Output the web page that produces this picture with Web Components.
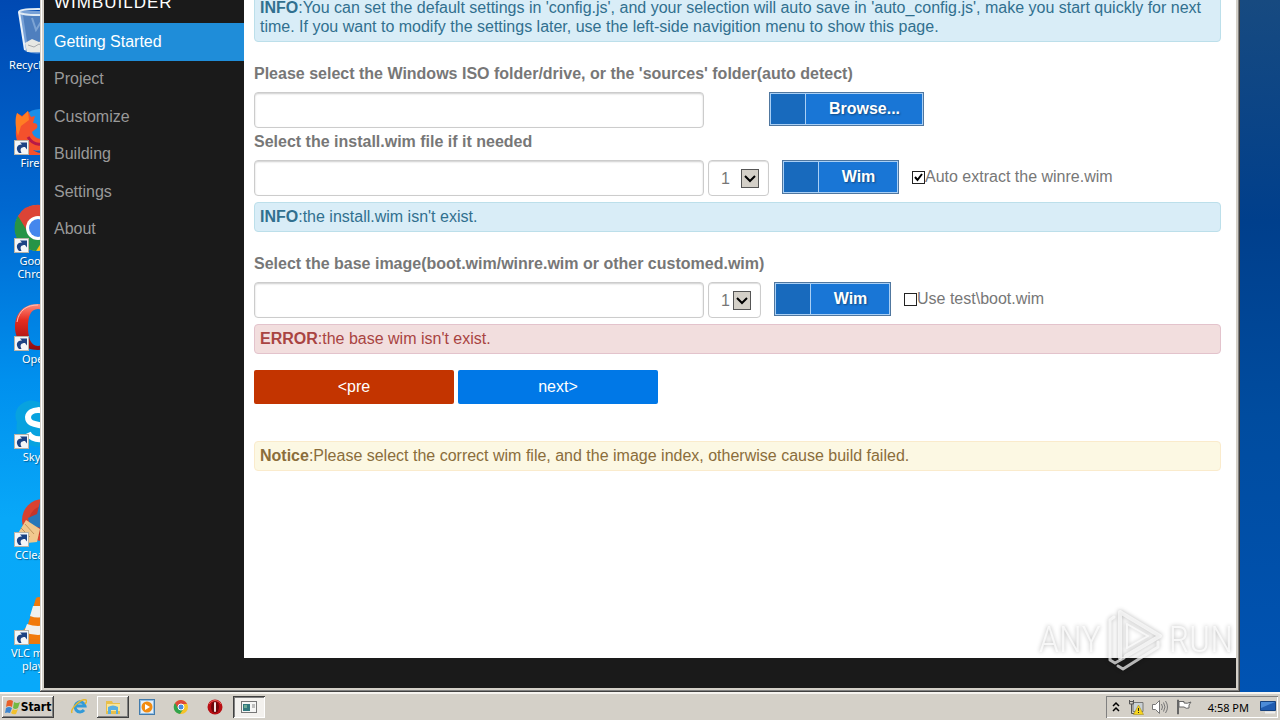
<!DOCTYPE html>
<html lang="en">
<head>
<meta charset="utf-8">
<title>WimBuilder</title>
<style>
  html, body { height: 100%; margin: 0; overflow: hidden; }
  body { font-family: "Liberation Sans", Arial, sans-serif; font-size: 16px; }
</style>
</head>
<body>
<desk-top></desk-top>

<script>
const shortcutArrow = `
  <rect x=".5" y="34.5" width="14" height="14" fill="#f4f6f8" stroke="#b9b4a8"/>
  <path d="M5 47C1 43 3 38 8 38.500L6 36.500h7v7l-2-2.500C7 41 5.500 43 7.500 47z" fill="#1d4384"/>`;

const desktopIcons = {
  recycle: `
    <path d="M5 3l6 40q12 5 24 0L43 3z" fill="#a9c5e4" opacity=".7"/>
    <path d="M9 7l5 33 20 2 5-34z" fill="#3f70b4" opacity=".7"/>
    <ellipse cx="24" cy="4" rx="19" ry="3" fill="none" stroke="#dfeaf4" stroke-width="2"/>
    <path d="M5 4l6 38" stroke="#e8f1fa" stroke-width="2"/>
    <path d="M11 35l7-4 7 3 8-3 3 8-5 5-18 0z" fill="#e7e8e4"/>
    <path d="M14 37l6 2 5-3 6 4" fill="none" stroke="#a7aaad"/>
    <path d="M18 10l4 12 5-8 4 12" fill="none" stroke="#7da4d4" stroke-width="2"/>`,
  firefox: `
    <circle cx="26" cy="24" r="21" fill="#1a8fe8"/>
    <path d="M3 7l5 3 6-5 3 6 4-1-2 7c4 0 5 2 4 5l-5 4c2 7 9 8 14 6 5 8-4 14-13 12 12 8 23 0 24-14 8 20-8 25-18 25C9 50-2 36 3 18z" fill="#f4512c"/>
    <path d="M3 7l5 4 6-6 1 9-8 6-3 10C1 20 1 12 3 7z" fill="#ff7d24"/>
    <path d="M14 31c6 10 16 8 20 4" fill="none" stroke="#b71948" stroke-width="3"/>`,
  chrome: `
    <circle cx="24" cy="24" r="23" fill="#fbc116"/>
    <path d="M24 24L4 12A23 23 0 0 0 22 47L33 30z" fill="#279447"/>
    <path d="M4 12A23 23 0 0 1 44 13H24L15 30z" fill="#dc4436"/>
    <circle cx="24" cy="24" r="12" fill="#fff"/>
    <circle cx="24" cy="24" r="9" fill="#4587ed"/>`,
  opera: `
    <defs><linearGradient id="red" x2="0" y2="1"><stop stop-color="#ff8d7d"/><stop offset=".35" stop-color="#e52c20"/><stop offset="1" stop-color="#8d0b10"/></linearGradient></defs>
    <path fill-rule="evenodd" fill="url(#red)" d="M24 2C8 2 1 13 1 25s8 23 23 23 23-11 23-23S40 2 24 2zm0 5c8 0 10 9 10 18s-2 19-10 19-10-10-10-19 2-18 10-18z"/>
    <path d="M3 20C5 8 13 3 24 3" fill="none" stroke="#ffc0b5" stroke-width="1"/>`,
  skype: `
    <path d="M11 2c9-4 13 1 18 1 14 2 19 14 17 24 4 12-7 24-20 20C10 47 0 36 3 22-1 14 3 5 11 2z" fill="#08a2df"/>
    <path d="M35 16c-3-8-20-8-21 1 0 12 21 4 21 15 0 9-17 10-21 1" fill="none" stroke="#fff" stroke-width="6"/>`,
  ccleaner: `
    <circle cx="29" cy="22" r="21" fill="#d84230"/>
    <circle cx="30" cy="23" r="15" fill="#c3352a"/>
    <path d="M26 4l-3 12-9 4 2 8 12 2L44 5z" fill="#2877b8"/>
    <path d="M12 22l14 9-3 13-10 1-10-8z" fill="#f1c78d"/>
    <path d="M11 26l9 10M7 30l9 9" stroke="#c1935a"/>`,
  vlc: `
    <path d="M7 37l4-5h26l4 5 2 11H5z" fill="#e87910"/>
    <path d="M22 2q3-2 5 0l12 39q-14 6-29 0z" fill="#f17a0b"/>
    <path d="M19 10h10l3 10q-8 3-16 0zM13 28q11 4 22 0l3 8q-14 6-28 0z" fill="#f0f0ed"/>`
};

const barIcons = {
  ie: `
    <path d="M13 11a5 5 0 1 1 1-4H4" fill="none" stroke="#329ad8" stroke-width="3"/>
    <path d="M1 14C-1 10 10-1 15 1c1 1 0 3-1 4" fill="none" stroke="#e5b72d" stroke-width="1.500"/>`,
  folder: `
    <path d="M1 2h6l1 2h7v11H1z" fill="#e8bf4b"/>
    <path d="M2 5h13v7H2z" fill="#f8e59b"/>
    <path d="M3 15V8q5-3 10 0v7h-2v-4H6v4z" fill="#58afe2"/>`,
  player: `
    <rect x=".5" y=".5" width="15" height="15" fill="#93bfe5" stroke="#427bac"/>
    <rect x="2" y="2" width="12" height="12" fill="#e5eff8"/>
    <circle cx="8" cy="8" r="5.500" fill="#f28c12"/>
    <path d="M6 5l5 3-5 3z" fill="#fff"/>`,
  chrome: `
    <circle cx="8" cy="8" r="7" fill="#f6c327"/>
    <path d="M8 8L2 4a7 7 0 0 0 5 11l4-6z" fill="#31a34c"/>
    <path d="M2 4a7 7 0 0 1 12 1H8L5 9z" fill="#dd4839"/>
    <circle cx="8" cy="8" r="3" fill="#478cdf" stroke="#fff"/>`,
  opera: `
    <circle cx="8" cy="8" r="7.500" fill="#b90d13"/>
    <ellipse cx="8" cy="8" rx="4" ry="6" fill="#6e080c"/>
    <rect x="7" y="3" width="2" height="10" rx="1" fill="#f5e5e3"/>
    <path d="M2 5a7 7 0 0 1 12 0" fill="none" stroke="#ee6660"/>`,
  window: `
    <rect x=".5" y="2.500" width="15" height="11" fill="#f6f6f5" stroke="#777"/>
    <path d="M2 5h7v7H2z" fill="#32787d"/>
    <path d="M3 6h3v3H3z" fill="#6fab95"/>
    <path d="M11 6h3M11 8h3" stroke="#888"/>`
};

class DesktopIcon extends HTMLElement {
  connectedCallback() {
    this.attachShadow({ mode: "open" }).innerHTML = `
      <style>
        :host { display: block; }
        a {
          display: flex; flex-direction: column; align-items: center; gap: 1px;
          color: #fff; text-decoration: none; text-align: center;
          font: 11px/13px "Noto Sans", "DejaVu Sans", sans-serif;
          text-shadow: 1px 1px 1px #0359;
        }
        svg { width: 48px; height: 49px; }
      </style>
      <a href="#">
        <svg viewBox="0 0 48 49" aria-hidden="true">
          ${desktopIcons[this.getAttribute("icon")]}
          ${this.getAttribute("icon") === "recycle" ? "" : shortcutArrow}
        </svg>
        <slot></slot>
      </a>`;
  }
}

class NavItem extends HTMLElement {
  connectedCallback() {
    this.attachShadow({ mode: "open" }).innerHTML = `
      <style>
        :host { display: grid; }
        a { display: flex; align-items: center; padding: 0 10px; color: #999; text-decoration: none; }
        :host([active]) a { background: #1f8dd9; color: #fff; }
      </style>
      <a href="#"><slot></slot></a>`;
  }
}

class NavMenu extends HTMLElement {
  connectedCallback() {
    this.attachShadow({ mode: "open" }).innerHTML = `
      <style>
        :host { display: block; background: #1a1a1a; }
        header { height: 30px; padding: 0 10px; color: #fff; font-size: 17px; line-height: 20px; letter-spacing: 1px; }
        nav { display: grid; grid-auto-rows: 1fr; height: 225px; }
      </style>
      <header>WIMBUILDER</header>
      <nav>
        <nav-item active>Getting Started</nav-item>
        <nav-item>Project</nav-item>
        <nav-item>Customize</nav-item>
        <nav-item>Building</nav-item>
        <nav-item>Settings</nav-item>
        <nav-item>About</nav-item>
      </nav>`;
  }
}

class AlertBox extends HTMLElement {
  connectedCallback() {
    this.attachShadow({ mode: "open" }).innerHTML = `
      <style>
        :host {
          display: block; padding: 4px 5px 5px; line-height: 19px;
          border: 1px solid #bcdfea; border-radius: 4px;
          background: #d9edf7; color: #31708f;
        }
        :host([type="error"]) { background: #f2dede; border-color: #e3c3cc; color: #a94442; }
        :host([type="notice"]) { background: #fcf8e3; border-color: #faebcc; color: #8a6d3b; }
      </style>
      <slot></slot>`;
  }
}

class CommandButton extends HTMLElement {
  connectedCallback() {
    this.attachShadow({ mode: "open" }).innerHTML = `
      <style>
        :host { display: block; }
        button {
          display: grid; grid-template-columns: 36px 1fr; align-items: stretch;
          width: 100%; height: 34px; padding: 0;
          border: 1px solid #50779f; box-shadow: inset 0 0 0 1px #a9cff5;
          background: #1976d6; color: #fff; font: bold 16px "Liberation Sans", sans-serif;
          text-shadow: 1px 1px 2px #0006;
        }
        i { margin: 1px 0 1px 1px; background: #186abd; border-right: 1px solid #a9cff5; }
        span { align-self: center; }
      </style>
      <button type="button"><i></i><span><slot></slot></span></button>`;
  }
}

class IndexSelect extends HTMLElement {
  connectedCallback() {
    this.attachShadow({ mode: "open" }).innerHTML = `
      <style>
        :host { display: grid; height: 36px; }
        select, svg { grid-area: 1 / 1; }
        select {
          appearance: none; box-sizing: border-box; width: 100%; height: 100%; margin: 0; padding: 0 0 0 12px;
          border: 1px solid #ccc; border-radius: 4px; background: #fff; color: #777;
          box-shadow: inset 0 1px 1px #0002; font: 16px "Liberation Sans", sans-serif;
        }
        svg { width: 18px; height: 19px; margin-right: 10px; place-self: center end; pointer-events: none; }
      </style>
      <select aria-label="Image index"><option>1</option></select>
      <svg viewBox="0 0 18 19" aria-hidden="true">
        <rect x=".5" y=".5" width="17" height="18" fill="#d4d0c8" stroke="#555"/>
        <path d="M4 7l5 5 5-5" fill="none" stroke="#000" stroke-width="2"/>
      </svg>`;
  }
}

class CheckOption extends HTMLElement {
  connectedCallback() {
    this.attachShadow({ mode: "open" }).innerHTML = `
      <style>
        :host { display: block; }
        label { display: flex; align-items: center; height: 34px; }
        span { display: grid; }
        input, svg { grid-area: 1 / 1; width: 13px; height: 13px; }
        input { appearance: none; box-sizing: border-box; margin: 0; border: 1px solid #222; background: #fff; }
        svg { visibility: hidden; pointer-events: none; }
        input:checked + svg { visibility: visible; }
      </style>
      <label>
        <span>
          <input type="checkbox" ${this.hasAttribute("checked") ? "checked" : ""}>
          <svg viewBox="0 0 13 13" aria-hidden="true"><path d="M3 6l2.500 3L10 3" fill="none" stroke="#000" stroke-width="2"/></svg>
        </span>
        <slot></slot>
      </label>`;
  }
}

// label + text box, with the controls next to it slotted in
class PathField extends HTMLElement {
  connectedCallback() {
    this.attachShadow({ mode: "open" }).innerHTML = `
      <style>
        :host { display: block; }
        label { display: block; margin-bottom: 4px; font-weight: bold; line-height: 28px; }
        div { display: flex; align-items: flex-start; gap: 4px; }
        input {
          box-sizing: border-box; width: 450px; height: 36px; padding: 0 12px;
          border: 1px solid #ccc; border-radius: 4px; box-shadow: inset 0 1px 2px #0003;
          color: #777; font: 16px "Liberation Sans", sans-serif;
        }
      </style>
      <label for="path">${this.getAttribute("label")}</label>
      <div><input id="path" type="text"><slot></slot></div>`;
  }
}

class SetupPage extends HTMLElement {
  connectedCallback() {
    this.attachShadow({ mode: "open" }).innerHTML = `
      <style>
        :host { display: block; padding: 0 15px 0 10px; background: #fff; color: #777; }
        path-field + alert-box { margin-top: 6px; }
        .section { margin-top: 18px; }
        .browse { width: 155px; margin-left: 61px; }
        .wim { width: 117px; margin-left: 9px; }
        check-option { margin-left: 9px; }
        .wide { width: 61px; }
        .narrow { width: 53px; }
        .steps { display: flex; gap: 4px; margin: 16px 0 37px; }
        .steps button {
          width: 200px; height: 34px; border: 0; border-radius: 2px;
          background: #0078e7; color: #fff; font: 16px "Liberation Sans", sans-serif;
        }
        .steps .pre { background: #c33400; }
      </style>
      <alert-box><b>INFO</b>:You can set the default settings in 'config.js', and your selection will auto save in 'auto_config.js', make you start quickly for next time. If you want to modify the settings later, use the left-side navigition menu to show this page.</alert-box>
      <path-field class="section" label="Please select the Windows ISO folder/drive, or the 'sources' folder(auto detect)">
        <command-button class="browse">Browse...</command-button>
      </path-field>
      <path-field label="Select the install.wim file if it needed">
        <index-select class="wide"></index-select>
        <command-button class="wim">Wim</command-button>
        <check-option checked>Auto extract the winre.wim</check-option>
      </path-field>
      <alert-box><b>INFO</b>:the install.wim isn't exist.</alert-box>
      <path-field class="section" label="Select the base image(boot.wim/winre.wim or other customed.wim)">
        <index-select class="narrow"></index-select>
        <command-button class="wim">Wim</command-button>
        <check-option>Use test\\boot.wim</check-option>
      </path-field>
      <alert-box type="error"><b>ERROR</b>:the base wim isn't exist.</alert-box>
      <div class="steps">
        <button type="button" class="pre">&lt;pre</button>
        <button type="button">next&gt;</button>
      </div>
      <alert-box type="notice"><b>Notice</b>:Please select the correct wim file, and the image index, otherwise cause build failed.</alert-box>`;
  }
}

class AppWindow extends HTMLElement {
  connectedCallback() {
    this.attachShadow({ mode: "open" }).innerHTML = `
      <style>
        :host {
          display: grid; grid-template: 1fr 30px / 200px 1fr; box-sizing: border-box; padding: 4px;
          background: linear-gradient(#1a1a1a, #1a1a1a) content-box, #d4d0c8;
          box-shadow: inset -1px -1px #404040, inset 1px 0 #d4d0c8, inset -2px -2px #808080, inset 2px 0 #fff;
        }
      </style>
      <nav-menu></nav-menu>
      <setup-page></setup-page>`;
  }
}

class WaterMark extends HTMLElement {
  connectedCallback() {
    this.attachShadow({ mode: "open" }).innerHTML = `
      <style>
        :host {
          display: flex; align-items: center; gap: 6px; pointer-events: none;
          color: #ffffffc0; font: 300 37px/62px "Roboto Condensed", Roboto, sans-serif;
          filter: drop-shadow(0 0 2px #0006);
        }
        svg { width: 56px; height: 64px; }
      </style>
      <span>ANY</span>
      <svg viewBox="0 0 56 64" aria-hidden="true" fill="none" stroke="#ffffffb0" stroke-width="4" stroke-linejoin="round" stroke-linecap="round">
        <path d="M13 50V4l40 24-34 20"/>
        <path d="M20 40V16l21 12z" stroke-width="2"/>
        <path d="M7 9l-4 3v40l5 3 9-5M11 58l5 3 35-22v-5" stroke-width="3"/>
      </svg>
      <span>RUN</span>`;
  }
}

class TaskButton extends HTMLElement {
  connectedCallback() {
    this.attachShadow({ mode: "open" }).innerHTML = `
      <style>
        :host { display: block; }
        button {
          display: grid; place-items: center; width: 32px; height: 22px; padding: 0;
          border: 0; background: none;
        }
        :host([raised]) button { box-shadow: inset -1px -1px #404040, inset 1px 1px #fff, inset -2px -2px #808080; }
        :host([pressed]) button { background: #f3f1ee; box-shadow: inset 1px 1px #404040, inset -1px -1px #fff, inset 2px 2px #808080; }
        svg { width: 16px; height: 16px; }
      </style>
      <button type="button" aria-label="${this.getAttribute("icon")}">
        <svg viewBox="0 0 16 16">${barIcons[this.getAttribute("icon")]}</svg>
      </button>`;
  }
}

class TaskBar extends HTMLElement {
  connectedCallback() {
    this.attachShadow({ mode: "open" }).innerHTML = `
      <style>
        :host {
          display: flex; align-items: center; gap: 2px; box-sizing: border-box; height: 28px; padding: 2px 2px 0;
          background: #d4d0c8; box-shadow: inset 0 2px #f6f4f0;
        }
        .start {
          display: flex; align-items: center; justify-content: center; gap: 0; width: 52px; height: 22px;
          margin-right: 7px; padding: 0; border: 0; background: #d4d0c8; color: #000;
          box-shadow: inset -1px -1px #404040, inset 1px 1px #fff, inset -2px -2px #808080;
          font: bold 12px "DejaVu Sans Condensed", "DejaVu Sans", sans-serif;
        }
        .start svg { width: 16px; height: 16px; }
        .tray {
          display: flex; align-items: center; gap: 8px; box-sizing: border-box; height: 22px;
          margin-left: auto; padding: 0 2px 0 6px; box-shadow: inset 1px 1px #808080, inset -1px -1px #fff;
          font: 11px "Noto Sans", "DejaVu Sans", sans-serif;
        }
        .tray svg { width: 16px; height: 16px; }
        .tray .more { width: 8px; }
        time { margin: 0 3px 0 8px; }
      </style>
      <button type="button" class="start">
        <svg viewBox="0 0 16 16" aria-hidden="true">
          <path d="M2 2q3-2 6 0L7 8Q4 6 1 8z" fill="#e8602a"/>
          <path d="M9 3q3 2 6 0l-2 6q-3 2-5 0z" fill="#73b944"/>
          <path d="M1 9q3-2 6 0l-2 5q-3-1-5 0z" fill="#3d86d0"/>
          <path d="M8 10q2 2 5 0l-2 5q-3 1-5-1z" fill="#f2c12d"/>
        </svg>
        Start
      </button>
      <task-button icon="ie"></task-button>
      <task-button icon="folder" raised></task-button>
      <task-button icon="player"></task-button>
      <task-button icon="chrome"></task-button>
      <task-button icon="opera"></task-button>
      <task-button icon="window" pressed></task-button>
      <div class="tray">
        <svg class="more" viewBox="0 0 8 16" fill="none" stroke="#000" stroke-width="1.500"><path d="M1 7l3-3 3 3M1 12l3-3 3 3"/></svg>
        <svg viewBox="0 0 16 16">
          <path d="M5 3.500h10v9H5z" fill="#c9d1d5" stroke="#777"/>
          <path d="M1.500 1v4h4V1M3.500 5v9.500H7M1.500 2.500h4" fill="none" stroke="#555"/>
          <path d="M10.500 6l5 9.500h-10z" fill="#f7d51d" stroke="#9a8216" stroke-width=".5"/>
          <path d="M10.500 9v3M10.500 13v1" stroke="#222"/>
        </svg>
        <svg viewBox="0 0 16 16" fill="none" stroke="#777">
          <path d="M.5 5.500h3l4-4v13l-4-4h-3z" fill="#fff"/>
          <path d="M9.500 5q2 3 0 6M11.500 3.500q3 4.500 0 9M13.500 2q4 6 0 12"/>
        </svg>
        <svg viewBox="0 0 16 16" fill="#fff" stroke="#666">
          <path d="M1.500 1v14h1V1z"/>
          <path d="M3 2.500h5v1.500q3 1 7-1-3 3-2 6-3 1-5-1H3z"/>
        </svg>
        <time>4:58 PM</time>
        <svg viewBox="0 0 16 16">
          <path d="M.5 2.500h15v9H.5z" fill="#205cb0" stroke="#17427e"/>
          <path d="M1 3h14L1 9z" fill="#4c8bd7"/>
          <path d="M5 13.500h10" stroke="#eee" stroke-width="2"/>
        </svg>
      </div>`;
  }
}

class DeskTop extends HTMLElement {
  connectedCallback() {
    this.attachShadow({ mode: "open" }).innerHTML = `
      <style>
        :host { display: flex; flex-direction: column; height: 100vh; }
        main {
          position: relative; flex: 1; min-height: 0; overflow: hidden;
          background:
            linear-gradient(#174a80, #003f8c 32%, #004c9f 60%, #0053b3) right / 50% 100% no-repeat,
            linear-gradient(#0049b2, #0068d0 30%, #0090ee 55%, #08a8f8 75%, #08a9fa);
        }
        .icons { display: grid; grid-auto-rows: 98px; width: 76px; padding-top: 8px; }
        app-window { position: absolute; inset: -11px 40px 0; }
        water-mark { position: absolute; right: 47px; bottom: 20px; }
      </style>
      <main>
        <div class="icons">
          <desktop-icon icon="recycle">Recycle Bin</desktop-icon>
          <desktop-icon icon="firefox">Firefox</desktop-icon>
          <desktop-icon icon="chrome">Google Chrome</desktop-icon>
          <desktop-icon icon="opera">Opera</desktop-icon>
          <desktop-icon icon="skype">Skype</desktop-icon>
          <desktop-icon icon="ccleaner">CCleaner</desktop-icon>
          <desktop-icon icon="vlc">VLC media player</desktop-icon>
        </div>
        <app-window></app-window>
        <water-mark></water-mark>
      </main>
      <task-bar></task-bar>`;
  }
}

customElements.define("desktop-icon", DesktopIcon);
customElements.define("nav-item", NavItem);
customElements.define("nav-menu", NavMenu);
customElements.define("alert-box", AlertBox);
customElements.define("command-button", CommandButton);
customElements.define("index-select", IndexSelect);
customElements.define("check-option", CheckOption);
customElements.define("path-field", PathField);
customElements.define("setup-page", SetupPage);
customElements.define("app-window", AppWindow);
customElements.define("water-mark", WaterMark);
customElements.define("task-button", TaskButton);
customElements.define("task-bar", TaskBar);
customElements.define("desk-top", DeskTop);
</script>
</body>
</html>
